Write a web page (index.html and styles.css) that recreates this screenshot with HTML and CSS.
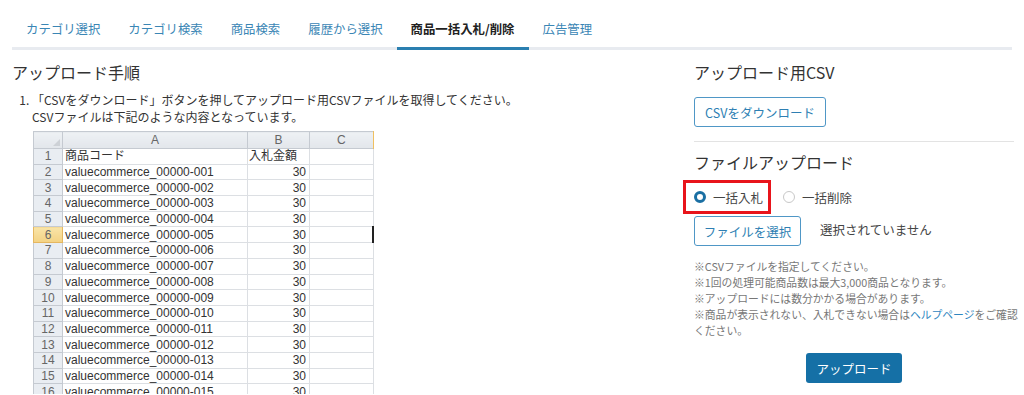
FILE: index.html
```html
<!DOCTYPE html>
<html lang="ja">

<head>
    <meta charset="UTF-8">
    <meta name="viewport" content="width=device-width, initial-scale=1.0">
    <title>商品一括入札/削除</title>
    <link rel="stylesheet" href="styles.css">
</head>

<body>
    <nav class="tabs">
        <a href="#" class="tab">カテゴリ選択</a>
        <a href="#" class="tab">カテゴリ検索</a>
        <a href="#" class="tab">商品検索</a>
        <a href="#" class="tab">履歴から選択</a>
        <a href="#" class="tab active">商品一括入札/削除</a>
        <a href="#" class="tab">広告管理</a>
    </nav>

    <div class="content">
        <section class="steps">
            <h3>アップロード手順</h3>
            <ol class="step-list">
                <li>
                    「CSVをダウンロード」ボタンを押してアップロード用CSVファイルを取得してください。<br>
                    CSVファイルは下記のような内容となっています。
                    <div class="sheet">
                        <table class="sheet-table">
                            <colgroup>
                                <col class="c-num">
                                <col class="c-a">
                                <col class="c-b">
                                <col class="c-c">
                            </colgroup>
                            <thead>
                                <tr>
                                    <th class="corner"><span class="corner-mark"></span></th>
                                    <th>A</th>
                                    <th>B</th>
                                    <th class="col-c">C</th>
                                </tr>
                            </thead>
                            <tbody id="sheetBody">
                                <tr>
                                    <th>1</th>
                                    <td>商品コード</td>
                                    <td class="jp">入札金額</td>
                                    <td></td>
                                </tr>
                            </tbody>
                        </table>
                    </div>
                </li>
            </ol>
        </section>

        <aside class="upload">
            <h3>アップロード用CSV</h3>
            <button class="btn-outline">CSVをダウンロード</button>
            <hr class="divider">

            <h3>ファイルアップロード</h3>
            <div class="radios">
                <label class="radio mark"><span class="dot checked"></span>一括入札</label>
                <label class="radio"><span class="dot"></span>一括削除</label>
            </div>
            <div class="file-row">
                <button class="btn-outline">ファイルを選択</button>
                <span class="file-name">選択されていません</span>
            </div>

            <ul class="notes">
                <li>※CSVファイルを指定してください。</li>
                <li>※1回の処理可能商品数は最大3,000商品となります。</li>
                <li>※アップロードには数分かかる場合があります。</li>
                <li>※商品が表示されない、入札できない場合は<a href="#">ヘルプページ</a>をご確認ください。</li>
            </ul>

            <div class="submit-row">
                <button class="btn-primary">アップロード</button>
            </div>
        </aside>
    </div>

    <script>
        // fill the sample sheet rows
        var body = document.getElementById('sheetBody');
        for (var i = 1; i <= 16; i++) {
            var code = 'valuecommerce_00000-' + ('00' + i).slice(-3);
            var tr = document.createElement('tr');
            if (i === 5) tr.className = 'active-row';
            tr.innerHTML = '<th>' + (i + 1) + '</th><td>' + code + '</td><td class="num">30</td><td></td>';
            body.appendChild(tr);
        }
    </script>
</body>

</html>
```

FILE: styles.css
```css
body {
    margin: 0;
    font-family: "Noto Sans CJK JP", sans-serif;
    color: #333;
    background-color: #fff;
}

/* tabs */
.tabs {
    display: flex;
    margin: 0 12px;
    border-bottom: 3px solid #e8ebf0;
}

.tab {
    padding: 20px 14px 9px;
    font-size: 12.4px;
    line-height: 18px;
    color: #3a86b5;
    text-decoration: none;
    border-bottom: 3px solid transparent;
    margin-bottom: -3px;
}

.tab.active {
    color: #222;
    font-weight: bold;
    border-bottom-color: #2a7fb0;
}

/* layout */
.content {
    display: flex;
    padding: 0 10px 0 12px;
}

.steps {
    flex: 1;
}

.upload {
    width: 320px;
}

h3 {
    margin: 11px 0 0;
    font-size: 16px;
    font-weight: normal;
    line-height: 22px;
    color: #333;
}

.step-list {
    margin: 9px 0 0;
    padding-left: 20px;
    font-size: 12px;
    line-height: 16.5px;
}

/* sheet picture */
.sheet {
    margin: 6px 0 0 1px;
    width: 341px;
    height: 263px;
    overflow: hidden;
    display: flex;
}

.sheet-table {
    border-collapse: collapse;
    table-layout: fixed;
    width: 340px;
    height: max-content;
    font-family: "Liberation Sans", "Noto Sans CJK JP", sans-serif;
    font-size: 12px;
    color: #333;
}

.c-num { width: 29px; }
.c-a { width: 185px; }
.c-b { width: 62px; }
.c-c { width: 64px; }

.sheet-table tr {
    height: 15.7px;
}

.sheet-table th,
.sheet-table td {
    height: auto;
    padding: 0 3px;
    line-height: 14px;
    border: 1px solid #dcdfe3;
    white-space: nowrap;
    overflow: hidden;
}

.sheet-table thead tr {
    height: 17px;
}

.sheet-table thead th {
    font-weight: normal;
    color: #666;
    background: linear-gradient(#eef1f4, #e2e6eb);
    border-color: #c5cad1;
}

.sheet-table tbody th {
    font-weight: normal;
    color: #666;
    background-color: #e9edf2;
    border-color: #c5cad1;
    text-align: center;
    padding: 0;
}

.sheet-table td {
    padding-left: 2px;
}

.sheet-table .jp {
    padding-left: 1px;
}

.sheet-table .num {
    text-align: right;
    padding-right: 3px;
}

.sheet-table thead .col-c {
    border-right: 2px solid #f0c060;
}

.sheet-table .corner {
    text-align: right;
    vertical-align: bottom;
    padding: 0 2px 2px 0;
    line-height: 0;
}

.corner-mark {
    display: inline-block;
    width: 0;
    height: 0;
    border-left: 7px solid transparent;
    border-bottom: 7px solid #cdd1d6;
}

.sheet-table .active-row th {
    background: linear-gradient(#f9e4a8, #f3d283);
    border-color: #e5b760;
}

.sheet-table .active-row td:last-child {
    border-right: 3px solid #222;
}

/* right column */
.btn-outline {
    height: 30px;
    padding: 0 9px;
    font-family: inherit;
    font-size: 12.5px;
    color: #2e7fb3;
    background-color: #fff;
    border: 1px solid #4f97c6;
    border-radius: 3px;
    cursor: pointer;
}

.upload > .btn-outline {
    margin-top: 14px;
    width: 132px;
}

.divider {
    margin: 14px 0 0;
    border: none;
    border-top: 1px solid #e3e3e3;
}

.upload .divider + h3 {
    margin-top: 9px;
}

.radios {
    display: flex;
    align-items: center;
    margin-top: 7px;
    font-size: 12.5px;
    color: #444;
}

.radio {
    display: flex;
    align-items: center;
    gap: 7px;
    height: 28px;
}

.mark {
    margin-left: -11px;
    padding: 0 5px 0 8px;
    border: 3px solid #e8141b;
    margin-right: 12px;
}

.dot {
    width: 12px;
    height: 12px;
    box-sizing: border-box;
    border-radius: 50%;
    border: 1px solid #c8c8c8;
    background-color: #fff;
}

.dot.checked {
    border: 3.5px solid #1a6fa3;
}

.file-row {
    display: flex;
    align-items: center;
    gap: 19px;
    margin-top: 2px;
}

.file-row .btn-outline {
    width: 107px;
    padding: 0;
}

.file-name {
    font-size: 12.5px;
    color: #444;
    padding-bottom: 4px;
}

.notes {
    list-style: none;
    margin: 12px -8px 0 0;
    padding: 0;
    font-size: 10.8px;
    line-height: 16px;
    color: #777;
}

.notes a {
    color: #2f86c0;
    text-decoration: none;
}

.submit-row {
    display: flex;
    justify-content: center;
    margin-top: 15px;
}

.btn-primary {
    width: 96px;
    height: 30px;
    font-family: inherit;
    font-size: 12.5px;
    color: #fff;
    background-color: #1570a6;
    border: none;
    border-radius: 3px;
    cursor: pointer;
}
```
